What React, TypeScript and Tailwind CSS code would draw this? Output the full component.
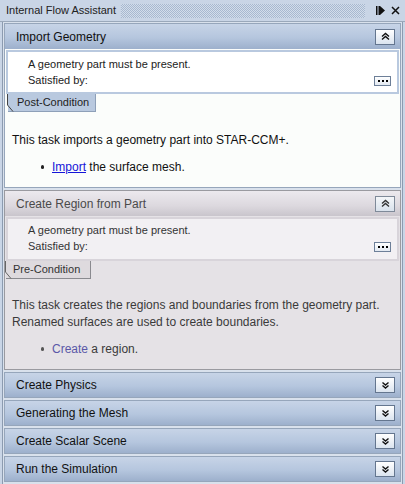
import React from "react";

const UpBtn = ({ down = false, muted = false }: { down?: boolean; muted?: boolean }) => (
  <div className={`w-[20px] h-[16px] border flex items-center justify-center ${muted ? "border-[#7f8a99] bg-[linear-gradient(#f4f6f9,#d9e2ec)]" : "border-[#64768f] bg-[linear-gradient(#ffffff,#dbe4ef)]"}`}>
    <svg width="9" height="9" viewBox="0 0 9 9" fill="none" stroke={muted ? "#333" : "#111"} strokeWidth="1.4">
      {down ? (
        <>
          <path d="M1.5 1.5 L4.5 4 L7.5 1.5" />
          <path d="M1.5 4.5 L4.5 7 L7.5 4.5" />
        </>
      ) : (
        <>
          <path d="M1 4.5 L4.5 1.5 L8 4.5" />
          <path d="M1 7.5 L4.5 4.5 L8 7.5" />
        </>
      )}
    </svg>
  </div>
);

const Dots = () => (
  <div className="w-[17px] h-[10px] border border-[#6d7f98] bg-[linear-gradient(#ffffff,#e3e9f1)] flex items-center justify-center gap-[2px]">
    <span className="w-[2px] h-[2px] bg-black" />
    <span className="w-[2px] h-[2px] bg-black" />
    <span className="w-[2px] h-[2px] bg-black" />
  </div>
);

const Header = ({ title, down = false, muted = false, h = "h-[25px]" }: { title: string; down?: boolean; muted?: boolean; h?: string }) => (
  <div
    className={`${h} flex items-center justify-between pl-[11px] pr-[5px] ${
      muted
        ? "bg-[linear-gradient(#ece9ee,#dcd8de_60%,#c9c5cc)] text-[#4a4a4a]"
        : "bg-[linear-gradient(#c7d4e7,#b5c6de_55%,#9db0cc)] text-[#111]"
    }`}
  >
    <span className="text-[12px]">{title}</span>
    <UpBtn down={down} muted={muted} />
  </div>
);

export default function App() {
  return (
    <div
      className="w-[405px] h-[484px] bg-[#c9d5e6] overflow-hidden"
      style={{ fontFamily: '"Liberation Sans", Arial, sans-serif' }}
    >
      {/* title bar */}
      <div className="h-[22px] flex items-center pl-[6px] pr-[5px] gap-[5px] border-b border-[#9aa8ba]">
        <span className="text-[11px] text-[#222] whitespace-nowrap">Internal Flow Assistant</span>
        <div className="flex-1 h-[14px] bg-[repeating-conic-gradient(#a7b8d0_0%_25%,#d3ddea_0%_50%)] bg-[length:2px_2px]" />
        <div className="flex items-center gap-[6px] pl-[6px]">
          <svg width="9" height="9" viewBox="0 0 9 9">
            <rect x="0" y="0" width="1.5" height="9" fill="#111" />
            <rect x="2.5" y="0" width="1.5" height="9" fill="#111" />
            <path d="M4 0 L9 4.5 L4 9 Z" fill="#111" />
          </svg>
          <svg width="9" height="9" viewBox="0 0 9 9" stroke="#111" strokeWidth="1.5">
            <path d="M1 1 L8 8 M8 1 L1 8" />
          </svg>
        </div>
      </div>

      {/* frame */}
      <div className="mx-[2px] border-l border-r border-[#8c9bb0] bg-[#d9e1ec] px-[1px] pt-[1px] flex flex-col gap-[2px] h-[462px]">
        {/* Section 1 */}
        <div className="border border-[#96a6bb] bg-[#fbfdfb] flex flex-col">
          <Header title="Import Geometry" />
          <div className="mx-[1px] mt-[1px] border-2 border-[#b9c9df] bg-white h-[44px] pl-[20px] pr-[6px] pt-[4px] text-[11px] text-[#222]">
            <div className="leading-[16px]">A geometry part must be present.</div>
            <div className="leading-[17px] flex items-center justify-between">
              <span>Satisfied by:</span>
              <Dots />
            </div>
          </div>
          <div className="flex">
            <div className="ml-[3px] w-[88px] h-[18px] bg-[#b9c9df] border-r border-b border-[#8ea0b8] flex items-center pl-[9px] text-[11px] text-[#222] relative">
              <svg className="absolute left-[-1px] top-0" width="8" height="18" viewBox="0 0 8 18" fill="none" stroke="#444" strokeWidth="1">
                <path d="M0.5 0 L0.5 11 L6 17.5" />
              </svg>
              Post-Condition
            </div>
          </div>
          <div className="pl-[7px] pt-[20px] text-[12px] text-[#111] leading-[16px]">
            This task imports a geometry part into STAR-CCM+.
          </div>
          <div className="pl-[36px] pt-[11px] pb-[12px] text-[12px] text-[#111] leading-[16px] flex items-center">
            <span className="w-[3px] h-[4px] bg-[#222] rounded-full mr-[8px]" />
            <span className="text-[#1515d8] underline">Import</span>
            <span>&nbsp;the surface mesh.</span>
          </div>
        </div>

        {/* Section 2 */}
        <div className="border border-[#9a9aa0] bg-[#e5e2e6] flex flex-col">
          <Header title="Create Region from Part" muted />
          <div className="mx-[1px] mt-[1px] border-2 border-[#d8d4da] bg-[#f2f0f3] h-[44px] pl-[20px] pr-[6px] pt-[3px] text-[11px] text-[#333]">
            <div className="leading-[16px]">A geometry part must be present.</div>
            <div className="leading-[17px] flex items-center justify-between">
              <span>Satisfied by:</span>
              <Dots />
            </div>
          </div>
          <div className="flex">
            <div className="ml-[1px] w-[85px] h-[18px] bg-[#dedade] border-r border-b border-[#8a8a8f] flex items-center pl-[7px] text-[11px] text-[#333] relative">
              <svg className="absolute left-[-1px] top-0" width="8" height="18" viewBox="0 0 8 18" fill="none" stroke="#666" strokeWidth="1">
                <path d="M0.5 0 L0.5 11 L6 17.5" />
              </svg>
              Pre-Condition
            </div>
          </div>
          <div className="pl-[7px] pt-[18px] text-[12px] text-[#3a3a3a] leading-[17px]">
            <div>This task creates the regions and boundaries from the geometry part.</div>
            <div>Renamed surfaces are used to create boundaries.</div>
          </div>
          <div className="pl-[36px] pt-[10px] pb-[12px] text-[12px] text-[#3a3a3a] leading-[16px] flex items-center">
            <span className="w-[3px] h-[4px] bg-[#555] rounded-full mr-[8px]" />
            <span className="text-[#5a58a8]">Create</span>
            <span>&nbsp;a region.</span>
          </div>
        </div>

        {["Create Physics", "Generating the Mesh", "Create Scalar Scene", "Run the Simulation"].map((t) => (
          <div key={t} className="border border-[#96a6bb]">
            <Header title={t} down h="h-[24px]" />
          </div>
        ))}
      </div>
    </div>
  );
}
